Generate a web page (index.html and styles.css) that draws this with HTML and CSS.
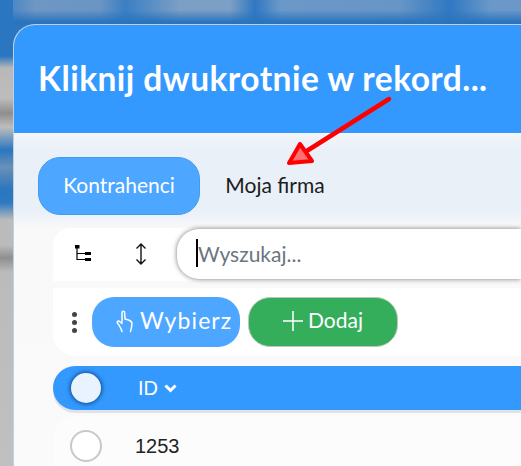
FILE: index.html
```html
<!DOCTYPE html>
<html lang="pl">
<head>
<meta charset="utf-8">
<title>Kontrahenci</title>
<link rel="stylesheet" href="styles.css">
</head>
<body>
<main class="modal">
  <header class="modal-head"><h1>Kliknij dwukrotnie w rekord...</h1></header>
  <nav class="tabs">
    <button class="tab tab-active">Kontrahenci</button>
    <button class="tab">Moja firma</button>
  </nav>
  <section class="content">
    <div class="bar bar-search">
      <button class="icon-btn icon-tree" aria-label="Drzewo">
        <svg width="16" height="16" viewBox="0 0 16 16"><path d="M0 0h4.500v3.500H0zM10 7h6v3h-6zM10 13h6v3h-6z" fill="#000"/><path d="M2 3v11.500h8M2 8.500h8" fill="none" stroke="#000" stroke-width="1.200"/></svg>
      </button>
      <button class="icon-btn icon-sort" aria-label="Wysokość">
        <svg width="12" height="22" viewBox="0 0 12 22"><path d="M6 1v20M1.500 5.500 6 1l4.500 4.500M1.500 16.500 6 21l4.500-4.500" fill="none" stroke="#111" stroke-width="1.400"/></svg>
      </button>
      <div class="search"><span class="caret"></span><span class="placeholder">Wyszukaj...</span></div>
    </div>
    <div class="bar bar-actions">
      <span class="dots"><i></i><i></i><i></i></span>
      <button class="btn btn-blue">
        <svg width="17" height="23" viewBox="0 0 17 23"><path d="M6 12V2.500a1.300 1.300 0 0 1 2.600 0l.4 6.500 3.500 1c2 .7 3.500 1.700 3.500 3.500 0 2.500-.8 5-1.500 8M6 21.500C5 17.500 3.500 16 1.500 13c-.8-1.200.5-2.500 1.800-1.800L6 13.500" fill="none" stroke="#fff" stroke-width="1.500" stroke-linejoin="round" stroke-linecap="round"/></svg>
        <span class="label-wybierz">Wybierz</span>
      </button>
      <button class="btn btn-green">
        <svg width="20" height="20" viewBox="0 0 20 20"><path d="M10 0v20M0 10h20" stroke="#fff" stroke-width="1.500"/></svg>
        Dodaj
      </button>
    </div>
    <div class="table-head">
      <span class="check check-head"></span>
      <span class="col-id">ID
        <svg width="13" height="9" viewBox="0 0 13 9"><path d="M1.500 1.500 6.500 6.500l5-5" fill="none" stroke="#fff" stroke-width="3"/></svg>
      </span>
    </div>
    <div class="table-row">
      <span class="check"></span>
      <span class="cell-id">1253</span>
    </div>
  </section>
</main>
<svg class="arrow" width="521" height="466" viewBox="0 0 521 466" aria-hidden="true">
  <path d="M389 99 302 154" stroke="#f00" stroke-width="4.500" stroke-linecap="round" fill="none"/>
  <path d="M289 163 300 144 312 161Z" fill="#ff7070" stroke="#f00" stroke-width="4" stroke-linejoin="round"/>
</svg>
</body>
</html>
```
FILE: styles.css
```css
* { box-sizing: border-box; }
html, body { margin: 0; height: 100%; }
body {
  width: 521px;
  height: 466px;
  overflow: hidden;
  padding: 24px 0 0 13px;
  font-family: "Lato", "Liberation Sans", sans-serif;
  background:
    linear-gradient(180deg, #2a76c0 0, #2a76c0 56px, #b8b8b8 68px, #bdbdbd 98px, #8e8e8e 113px, #bdbdbd 127px, #2a76c0 150px, #6a90b8 167px, #2a76c0 190px, #2f79c2 203px, #bbb 220px, #bbb 245px, #8f8f8f 258px, #bbb 272px, #c0c0c0 466px) left top / 13px 100% no-repeat,
    linear-gradient(180deg, rgba(42,116,189,0) 10px, #2a74bd 22px) top left / 100% 24px no-repeat,
    linear-gradient(90deg, #3c7fc2 0, #6e97c4 35px, #6a95c4 100px, #3a7fc4 125px, #7c9fc5 180px, #7c9fc5 230px, #2f78c2 255px, #6a98c8 280px, #6795c6 400px, #2f78c2 450px, #6a98c8 490px, #6a98c8 521px) top left / 100% 24px no-repeat,
    #2a76c0;
}
.modal {
  width: 508px;
  height: 442px;
  background: linear-gradient(180deg, #f3f5f9 108px, #e9f0f8 125px, #e9f0f8 185px, #f9f9fa 204px, #fafafb 100%);
  border-top: 1px solid #c4cfdc;
  border-left: 1px solid #c4cfdc;
  border-top-left-radius: 22px;
  overflow: hidden;
}
.modal-head {
  height: 108px;
  background: #3399ff;
  padding: 34px 0 0 24px;
}
.modal-head h1 {
  margin: 0;
  color: #fff;
  font-size: 33.500px;
  letter-spacing: .45px;
  font-weight: 700;
  line-height: 38px;
  white-space: nowrap;
}
.tabs {
  display: flex;
  padding: 24px 0 0 24px;
  height: 95px;
}
.tab {
  height: 58px;
  width: 150px;
  border: 0;
  border-radius: 22px;
  background: none;
  font: inherit;
  font-size: 21px;
  color: #1c1c1c;
  padding: 0 0 3px;
}
.tab-active {
  width: 162px;
  background: #4da6ff;
  border: 1px solid #3f9cf5;
  color: #fff;
}
.content {
  padding-left: 39px;
}
.bar { background: #fff; display: flex; align-items: center; }
.bar-search {
  height: 53px;
  border-radius: 18px 0 0 0;
  padding-left: 22px;
}
.icon-btn {
  border: 0;
  background: none;
  padding: 0;
  display: flex;
  justify-content: center;
  align-items: center;
}
.icon-tree { width: 16px; margin-top: -3px; }
.icon-sort { width: 12px; margin-left: 44px; margin-top: -1px; }
.search {
  margin-left: 30px;
  flex: 1;
  height: 50px;
  background: #fff;
  border-radius: 22px 0 0 22px;
  box-shadow: 0 0 5px rgba(0,0,0,.55);
  display: flex;
  align-items: center;
  padding: 0 0 1px 19px;
  margin-top: -2px;
}
.caret { width: 2px; height: 28px; background: #000; flex: none; }
.placeholder { color: #6c757d; font-size: 21px; }
.bar-actions {
  height: 68px;
  margin-top: 7px;
  border-radius: 0 0 0 22px;
  padding-left: 19px;
}
.dots { display: flex; flex-direction: column; gap: 3px; width: 6px; }
.dots i { width: 5px; height: 5px; border-radius: 50%; background: #444; }
.btn {
  height: 50px;
  width: 148px;
  border-radius: 22px;
  border: 0;
  color: #fff;
  font: inherit;
  font-size: 21px;
  display: flex;
  align-items: center;
  justify-content: center;
  gap: 6px;
  padding: 0 0 5px;
}
.btn svg { margin-top: 3px; }
.label-wybierz { font-size: 23px; letter-spacing: 1.100px; }
.btn-blue { background: #4da6ff; margin-left: 14px; justify-content: flex-start; padding-left: 24px; gap: 7px; }
.btn-green { background: #34ae5b; border: 1px solid #b9c9bd; width: 150px; margin-left: 8px; gap: 5px; }
.table-head {
  height: 44px;
  margin-top: 10px;
  background: #3399ff;
  border-radius: 22px 0 0 22px;
  box-shadow: 0 3px 0 #dfe3ea;
  display: flex;
  align-items: center;
  padding-left: 18px;
  color: #fff;
  font-family: "Liberation Sans", sans-serif;
  font-size: 20px;
}
.check {
  width: 32px;
  height: 32px;
  border-radius: 50%;
  background: #fff;
  border: 2px solid #c8c8c8;
  flex: none;
}
.check-head {
  background: #e8f3ff;
  border: 0;
  width: 30px;
  height: 30px;
  box-shadow: 0 0 4px 1px rgba(0,40,90,.7);
}
.col-id { margin-left: 37px; display: flex; align-items: center; gap: 6px; }
.table-row {
  height: 50px;
  margin-top: 6px;
  background: #fcfcfd;
  border-radius: 22px 0 0 0;
  display: flex;
  align-items: flex-start;
  padding: 14px 0 0 17px;
  font-family: "Liberation Sans", sans-serif;
  font-size: 20px;
  color: #222;
}
.cell-id { margin-left: 33px; margin-top: 5px; }
.arrow { position: absolute; left: 0; top: 0; pointer-events: none; }
```
